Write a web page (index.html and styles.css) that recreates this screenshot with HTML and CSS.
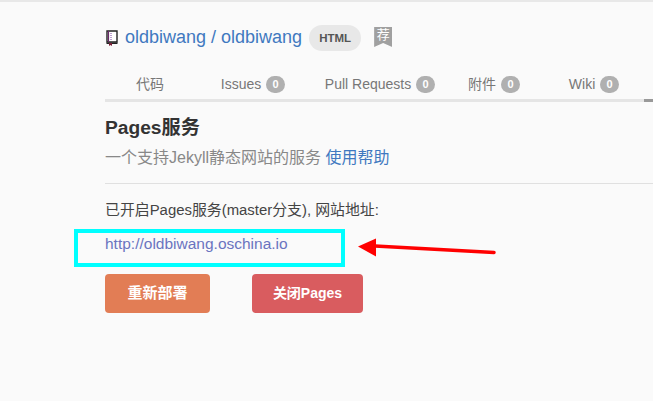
FILE: index.html
```html
<!DOCTYPE html>
<html>
<head>
    <meta charset="utf-8">
    <title>Pages服务</title>
    <link rel="stylesheet" href="styles.css">
</head>
<body>
<div class="wrap">
    <div class="repo-head">
        <svg class="book-icon" width="14" height="16" viewBox="0 0 14 16">
            <path d="M2 1h10v11H2z" fill="#fff" stroke="#222" stroke-width="1.400"/>
            <path d="M3.500 1v11" stroke="#6a2a6a" stroke-width="1.200"/>
            <path d="M6 3v7" stroke="#7a3fa0" stroke-width="1" stroke-dasharray="1 1"/>
            <path d="M1.500 12.500h11v1.500h-11z" fill="#222"/>
            <path d="M4 13h3v3l-1.500-1-1.500 1z" fill="#7a2038"/>
        </svg>
        <a class="repo-name" href="#">oldbiwang / oldbiwang</a>
        <span class="lang">HTML</span>
        <span class="rec">荐</span>
    </div>
    <div class="tabs">
        <a class="tab tab-code">代码</a>
        <a class="tab tab-issues">Issues <i class="num">0</i></a>
        <a class="tab tab-pulls">Pull Requests <i class="num">0</i></a>
        <a class="tab tab-files">附件 <i class="num">0</i></a>
        <a class="tab tab-wiki">Wiki <i class="num">0</i></a>
        <span class="tab-end"></span>
    </div>
    <div class="main">
        <h2 class="title">Pages服务</h2>
        <p class="desc">一个支持Jekyll静态网站的服务 <a href="#">使用帮助</a></p>
        <p class="status">已开启Pages服务(master分支), 网站地址:</p>
        <a class="site-link" href="#">http://oldbiwang.oschina.io</a>
        <div class="btns">
            <a class="btn btn-orange">重新部署</a>
            <a class="btn btn-red">关闭Pages</a>
        </div>
    </div>
    <div class="mark-box"></div>
    <svg class="mark-arrow" width="140" height="24" viewBox="0 0 140 24">
        <path d="M1 10.500L19 2.500V20.500z" fill="#f00"/>
        <path d="M18 10L137 16.500" stroke="#f00" stroke-width="3.500" stroke-linecap="round"/>
    </svg>
</div>
</body>
</html>
```

FILE: styles.css
```css
html, body, h2, p {
    margin: 0;
    padding: 0;
}

body {
    background: #fafafa;
    color: #333;
    font: 14px/1.3 "Liberation Sans", "Noto Sans CJK SC", sans-serif;
    overflow: hidden;
}

a {
    text-decoration: none;
}

.wrap {
    position: relative;
    height: 401px;
    padding-left: 105px;
    border-top: 2px solid #e8e8e8;
    box-sizing: border-box;
    overflow: hidden;
}

.repo-head {
    display: flex;
    align-items: center;
    height: 28px;
    margin-top: 22px;
}

.book-icon {
    margin-right: 6px;
}

.repo-name {
    font-size: 18px;
    color: #4078c0;
}

.lang {
    margin-left: 7px;
    width: 52px;
    height: 26px;
    line-height: 26px;
    border-radius: 13px;
    background: #e8e8e8;
    color: #555;
    font-size: 11.500px;
    font-weight: bold;
    text-align: center;
}

.rec {
    width: 18px;
    height: 20px;
    margin: 0 0 2px 13px;
    background: #a0a0a0;
    color: #fff;
    font-size: 13px;
    line-height: 16px;
    text-align: center;
    clip-path: polygon(0 0, 100% 0, 100% 100%, 50% 80%, 0 100%);
}

.tabs {
    display: flex;
    height: 33px;
    margin-top: 14px;
    border-bottom: 3px solid #e5e5e5;
    position: relative;
}

.tab {
    color: #777;
    font-size: 14px;
    line-height: 20px;
    padding-top: 8px;
    text-align: center;
}

.tab-code { width: 90px; }
.tab-issues { width: 116px; }
.tab-pulls { width: 138px; }
.tab-files { width: 90px; }
.tab-wiki { width: 110px; }

.num {
    display: inline-block;
    min-width: 19px;
    height: 17px;
    line-height: 17px;
    margin-left: 1px;
    border-radius: 9px;
    background: #b0b0b0;
    color: #fff;
    font-size: 11px;
    font-style: normal;
    font-weight: bold;
    vertical-align: 1px;
}

.tab-end {
    position: absolute;
    right: 0;
    bottom: -3px;
    width: 9px;
    height: 3px;
    background: #999;
}

.main {
    padding-top: 12px;
}

.title {
    font-size: 19.200px;
    line-height: 28px;
    color: #333;
}

.desc {
    margin-top: 5px;
    padding-bottom: 14px;
    border-bottom: 1px solid #e0e0e0;
    font-size: 16px;
    line-height: 22px;
    color: #888;
}

.desc a {
    color: #4078c0;
}

.status {
    margin-top: 16px;
    font-size: 14.900px;
    line-height: 20px;
    color: #444;
}

.site-link {
    display: block;
    margin-top: 14px;
    font-size: 15.500px;
    line-height: 20px;
    color: #6a74c0;
}

.btns {
    display: flex;
    gap: 42px;
    margin-top: 20px;
}

.btn {
    height: 39px;
    line-height: 38px;
    border-radius: 4px;
    color: #fff;
    font-size: 14px;
    font-weight: bold;
    text-align: center;
}

.btn-orange {
    width: 105px;
    background: #e27d55;
    font-size: 15px;
}

.btn-red {
    width: 111px;
    background: #d95c5f;
}

.mark-box {
    position: absolute;
    left: 74px;
    top: 227px;
    width: 271px;
    height: 38px;
    border: 4px solid #00ffff;
    box-sizing: border-box;
}

.mark-arrow {
    position: absolute;
    left: 357px;
    top: 234px;
}
```
